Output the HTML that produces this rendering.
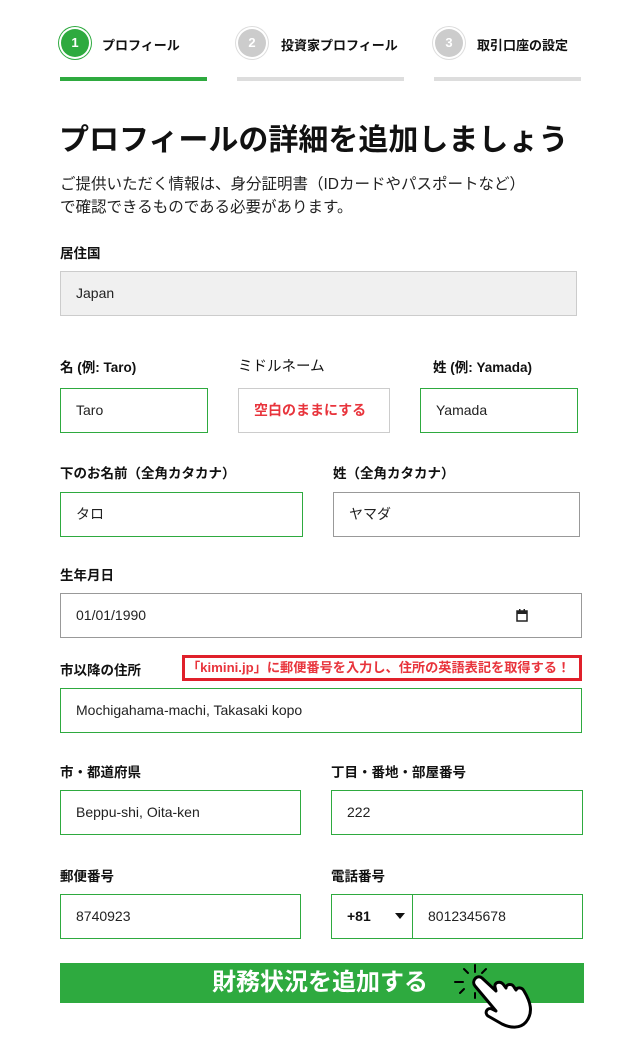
<!DOCTYPE html>
<html><head><meta charset="utf-8"><style>
body{margin:0;width:640px;height:1051px;background:#fff;font-family:"Liberation Sans","Noto Sans CJK JP",sans-serif;color:#111;position:relative;overflow:hidden}
.a{position:absolute}
.c{position:absolute;width:28px;height:28px;border-radius:50%;color:#fff;font-size:13px;font-weight:bold;text-align:center;line-height:28px}
.st{position:absolute;top:35px;font-size:13px;font-weight:bold}
.bar{position:absolute;top:77px;height:4px;background:#ddd}
.lb{position:absolute;font-size:13.5px;font-weight:bold}
.in{position:absolute;box-sizing:border-box;border:1px solid #2eaa3f;height:45px;font-size:14px;line-height:43px;padding-left:15px;color:#222}
</style></head><body>
<div class="c" style="left:61px;top:29px;background:#2eaa3f;box-shadow:0 0 0 2px #fff,0 0 0 3px #2eaa3f">1</div>
<div class="st" style="left:102px">プロフィール</div>
<div class="c" style="left:238px;top:29px;background:#ccc;box-shadow:0 0 0 2px #fff,0 0 0 3px #ddd">2</div>
<div class="st" style="left:281px">投資家プロフィール</div>
<div class="c" style="left:435px;top:29px;background:#ccc;box-shadow:0 0 0 2px #fff,0 0 0 3px #ddd">3</div>
<div class="st" style="left:477px">取引口座の設定</div>
<div class="bar" style="left:60px;width:147px;background:#2eaa3f"></div>
<div class="bar" style="left:237px;width:167px"></div>
<div class="bar" style="left:434px;width:147px"></div>

<div class="a" style="left:59px;top:115px;font-size:30px;font-weight:bold;white-space:nowrap">プロフィールの詳細を追加しましょう</div>
<div class="a" style="left:60px;top:173px;font-size:15.5px;line-height:23px;color:#222">ご提供いただく情報は、身分証明書（IDカードやパスポートなど）<br>で確認できるものである必要があります。</div>

<div class="lb" style="left:60px;top:242px">居住国</div>
<div class="in" style="left:60px;top:271px;width:517px;background:#f0f0f0;border-color:#ccc">Japan</div>

<div class="lb" style="left:60px;top:356px">名 (例: Taro)</div>
<div class="lb" style="left:238px;top:355px;font-weight:normal;font-size:14.5px">ミドルネーム</div>
<div class="lb" style="left:433px;top:356px">姓 (例: Yamada)</div>
<div class="in" style="left:60px;top:388px;width:148px">Taro</div>
<div class="in" style="left:238px;top:388px;width:152px;border-color:#ccc;color:#e8343c;font-weight:bold">空白のままにする</div>
<div class="in" style="left:420px;top:388px;width:158px">Yamada</div>

<div class="lb" style="left:60px;top:462px">下のお名前（全角カタカナ）</div>
<div class="lb" style="left:333px;top:462px">姓（全角カタカナ）</div>
<div class="in" style="left:60px;top:492px;width:243px">タロ</div>
<div class="in" style="left:333px;top:492px;width:247px;border-color:#999">ヤマダ</div>

<div class="lb" style="left:60px;top:564px">生年月日</div>
<div class="in" style="left:60px;top:593px;width:522px;border-color:#999">01/01/1990
<svg class="a" style="left:455px;top:15px" width="12" height="13" viewBox="0 0 12 13"><rect x="1" y="2" width="10" height="10" fill="none" stroke="#222" stroke-width="1.5"/><rect x="1" y="2" width="10" height="3" fill="#222"/><rect x="3" y="0" width="1.5" height="3" fill="#222"/><rect x="7.5" y="0" width="1.5" height="3" fill="#222"/></svg></div>

<div class="lb" style="left:60px;top:659px">市以降の住所</div>
<div class="a" style="left:182px;top:655px;width:400px;height:26px;box-sizing:border-box;border:3px solid #e0202a;color:#e8343c;font-size:13.2px;font-weight:bold;line-height:20px;padding-left:2px;white-space:nowrap;overflow:hidden">「kimini.jp」に郵便番号を入力し、住所の英語表記を取得する！</div>
<div class="in" style="left:60px;top:688px;width:522px">Mochigahama-machi, Takasaki kopo</div>

<div class="lb" style="left:60px;top:761px">市・都道府県</div>
<div class="lb" style="left:331px;top:761px">丁目・番地・部屋番号</div>
<div class="in" style="left:60px;top:790px;width:241px">Beppu-shi, Oita-ken</div>
<div class="in" style="left:331px;top:790px;width:252px">222</div>

<div class="lb" style="left:60px;top:865px">郵便番号</div>
<div class="lb" style="left:331px;top:865px">電話番号</div>
<div class="in" style="left:60px;top:894px;width:241px">8740923</div>
<div class="in" style="left:331px;top:894px;width:252px;padding-left:0">
<span class="a" style="left:15px;font-weight:bold;color:#111">+81</span>
<span class="a" style="left:63px;top:18px;width:0;height:0;border-left:5px solid transparent;border-right:5px solid transparent;border-top:6px solid #111"></span>
<span class="a" style="left:80px;top:0;width:1px;height:43px;background:#2eaa3f"></span>
<span class="a" style="left:96px">8012345678</span></div>

<div class="a" style="left:60px;top:963px;width:524px;height:40px;background:#2eaa3f"></div>
<div class="a" style="left:212px;top:963px;height:40px;line-height:40px;color:#fff;font-size:24px;font-weight:bold;white-space:nowrap">財務状況を追加する</div>
<svg class="a" style="left:450px;top:960px" width="90" height="70" viewBox="0 0 90 70">
<g stroke="#000" stroke-width="2" stroke-linecap="round"><line x1="5" y1="22" x2="13" y2="22"/><line x1="14" y1="9" x2="18" y2="13"/><line x1="25" y1="5" x2="25" y2="12"/><line x1="36" y1="9" x2="32" y2="13"/><line x1="10" y1="33" x2="14" y2="29"/><line x1="25" y1="38" x2="25" y2="33"/></g>
<path d="M25 26 C21 21 27 14 32 18 L46 31 L45 27 C44 22 50 21 53 24 L56 28 C56 24 62 23 64 27 L66 30 C67 27 72 27 74 31 C80 41 84 52 76 62 C70 69 60 68 52 64 L38 56 C34 53 37 47 42 49 L46 51 Z" fill="#fff" stroke="#000" stroke-width="3" stroke-linejoin="round"/>
</svg>
</body></html>
